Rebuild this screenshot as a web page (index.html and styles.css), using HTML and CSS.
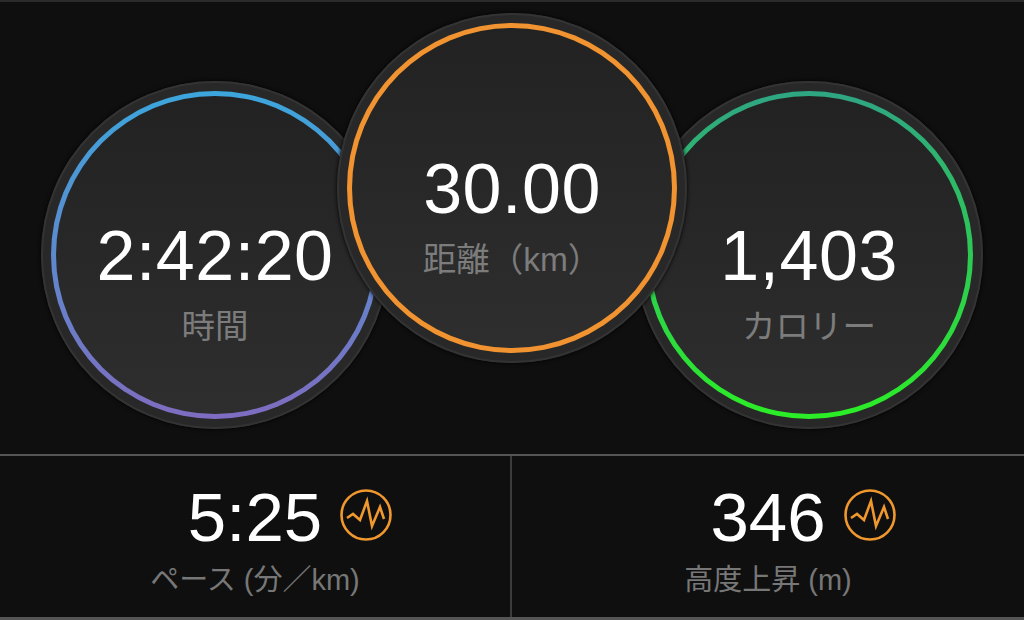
FILE: index.html
```html
<!DOCTYPE html>
<html lang="ja">
<head>
    <meta charset="UTF-8">
    <meta name="viewport" content="width=device-width, initial-scale=1.0">
    <title>アクティビティ概要</title>
    <link rel="stylesheet" href="styles.css">
</head>
<body>
    <div id="dials">
        <div class="dial dial-time">
            <div class="ring">
                <div class="face">
                    <div class="dial-value">2:42:20</div>
                    <div class="dial-label">時間</div>
                </div>
            </div>
        </div>
        <div class="dial dial-distance">
            <div class="ring">
                <div class="face">
                    <div class="dial-value">30.00</div>
                    <div class="dial-label">距離（km）</div>
                </div>
            </div>
        </div>
        <div class="dial dial-calories">
            <div class="ring">
                <div class="face">
                    <div class="dial-value">1,403</div>
                    <div class="dial-label">カロリー</div>
                </div>
            </div>
        </div>
    </div>

    <div id="stats">
        <div class="stat">
            <div class="stat-value">5:25
                <svg class="stat-icon" viewBox="-26 -26 52 52"><circle r="24.5"/><path d="M-19 3-13-1-6 5 1-14 6 11 14-8 18 4"/></svg>
            </div>
            <div class="stat-label">ペース (分／km)</div>
        </div>
        <div class="stat">
            <div class="stat-value">346
                <svg class="stat-icon" viewBox="-26 -26 52 52"><circle r="24.5"/><path d="M-19 3-13-1-6 5 1-14 6 11 14-8 18 4"/></svg>
            </div>
            <div class="stat-label">高度上昇 (m)</div>
        </div>
    </div>
</body>
</html>
```

FILE: styles.css
```css
* {
    margin: 0;
    padding: 0;
    box-sizing: border-box;
}
body {
    width: 1024px;
    height: 620px;
    overflow: hidden;
    background-color: #0f0f0f;
    font-family: "Liberation Sans", "Noto Sans CJK JP", sans-serif;
    display: flex;
    flex-direction: column;
}
#dials {
    height: 454px;
    display: flex;
    align-items: flex-start;
    padding-left: 41px;
    border-top: 2px solid #2b2b2b;
}
.dial {
    flex: none;
    width: 348px;
    height: 348px;
    padding: 10px;
    border-radius: 50%;
    background-color: #282828;
    box-shadow: inset 0 0 0 2px #333, 0 0 4px #000;
}
.dial-time {
    margin-top: 79px;
}
.dial-distance {
    width: 350px;
    height: 350px;
    margin-top: 11px;
    margin-left: -52px;
    position: relative;
}
.dial-calories {
    margin-top: 79px;
    margin-left: -52px;
}
.ring {
    height: 100%;
    padding: 5px;
    border-radius: 50%;
}
.dial-time .ring {
    background: linear-gradient(#3ca6dc, #7f6cc0);
}
.dial-distance .ring {
    background-color: #f09330;
}
.dial-calories .ring {
    background: linear-gradient(#2fa583, #2bee26);
}
.face {
    height: 100%;
    padding-top: 54px;
    border-radius: 50%;
    background: linear-gradient(#222, #2e2e2e);
    display: flex;
    flex-direction: column;
    align-items: center;
    justify-content: center;
}
.dial-value {
    color: #fff;
    font-size: 70px;
    line-height: 80px;
    letter-spacing: 0.5px;
}
.dial-label {
    color: #7c7c7c;
    font-size: 33.5px;
    line-height: 44px;
    margin-top: 9px;
}
#stats {
    flex: 1;
    display: grid;
    grid-template-columns: 510px 1fr;
    border-top: 2px solid #555;
    border-bottom: 3px solid #555;
}
.stat {
    display: flex;
    flex-direction: column;
    align-items: center;
    padding-top: 24px;
}
.stat + .stat {
    border-left: 2px solid #3c3c3c;
}
.stat-value {
    position: relative;
    color: #fff;
    font-size: 69px;
    line-height: 76px;
}
.stat-icon {
    position: absolute;
    left: 100%;
    top: 9px;
    margin-left: 18px;
    width: 52px;
    height: 52px;
    fill: none;
    stroke: #f0982e;
    stroke-width: 2.6;
}
.stat-label {
    color: #777;
    font-size: 29px;
    line-height: 36px;
    margin-top: 6px;
}
```
